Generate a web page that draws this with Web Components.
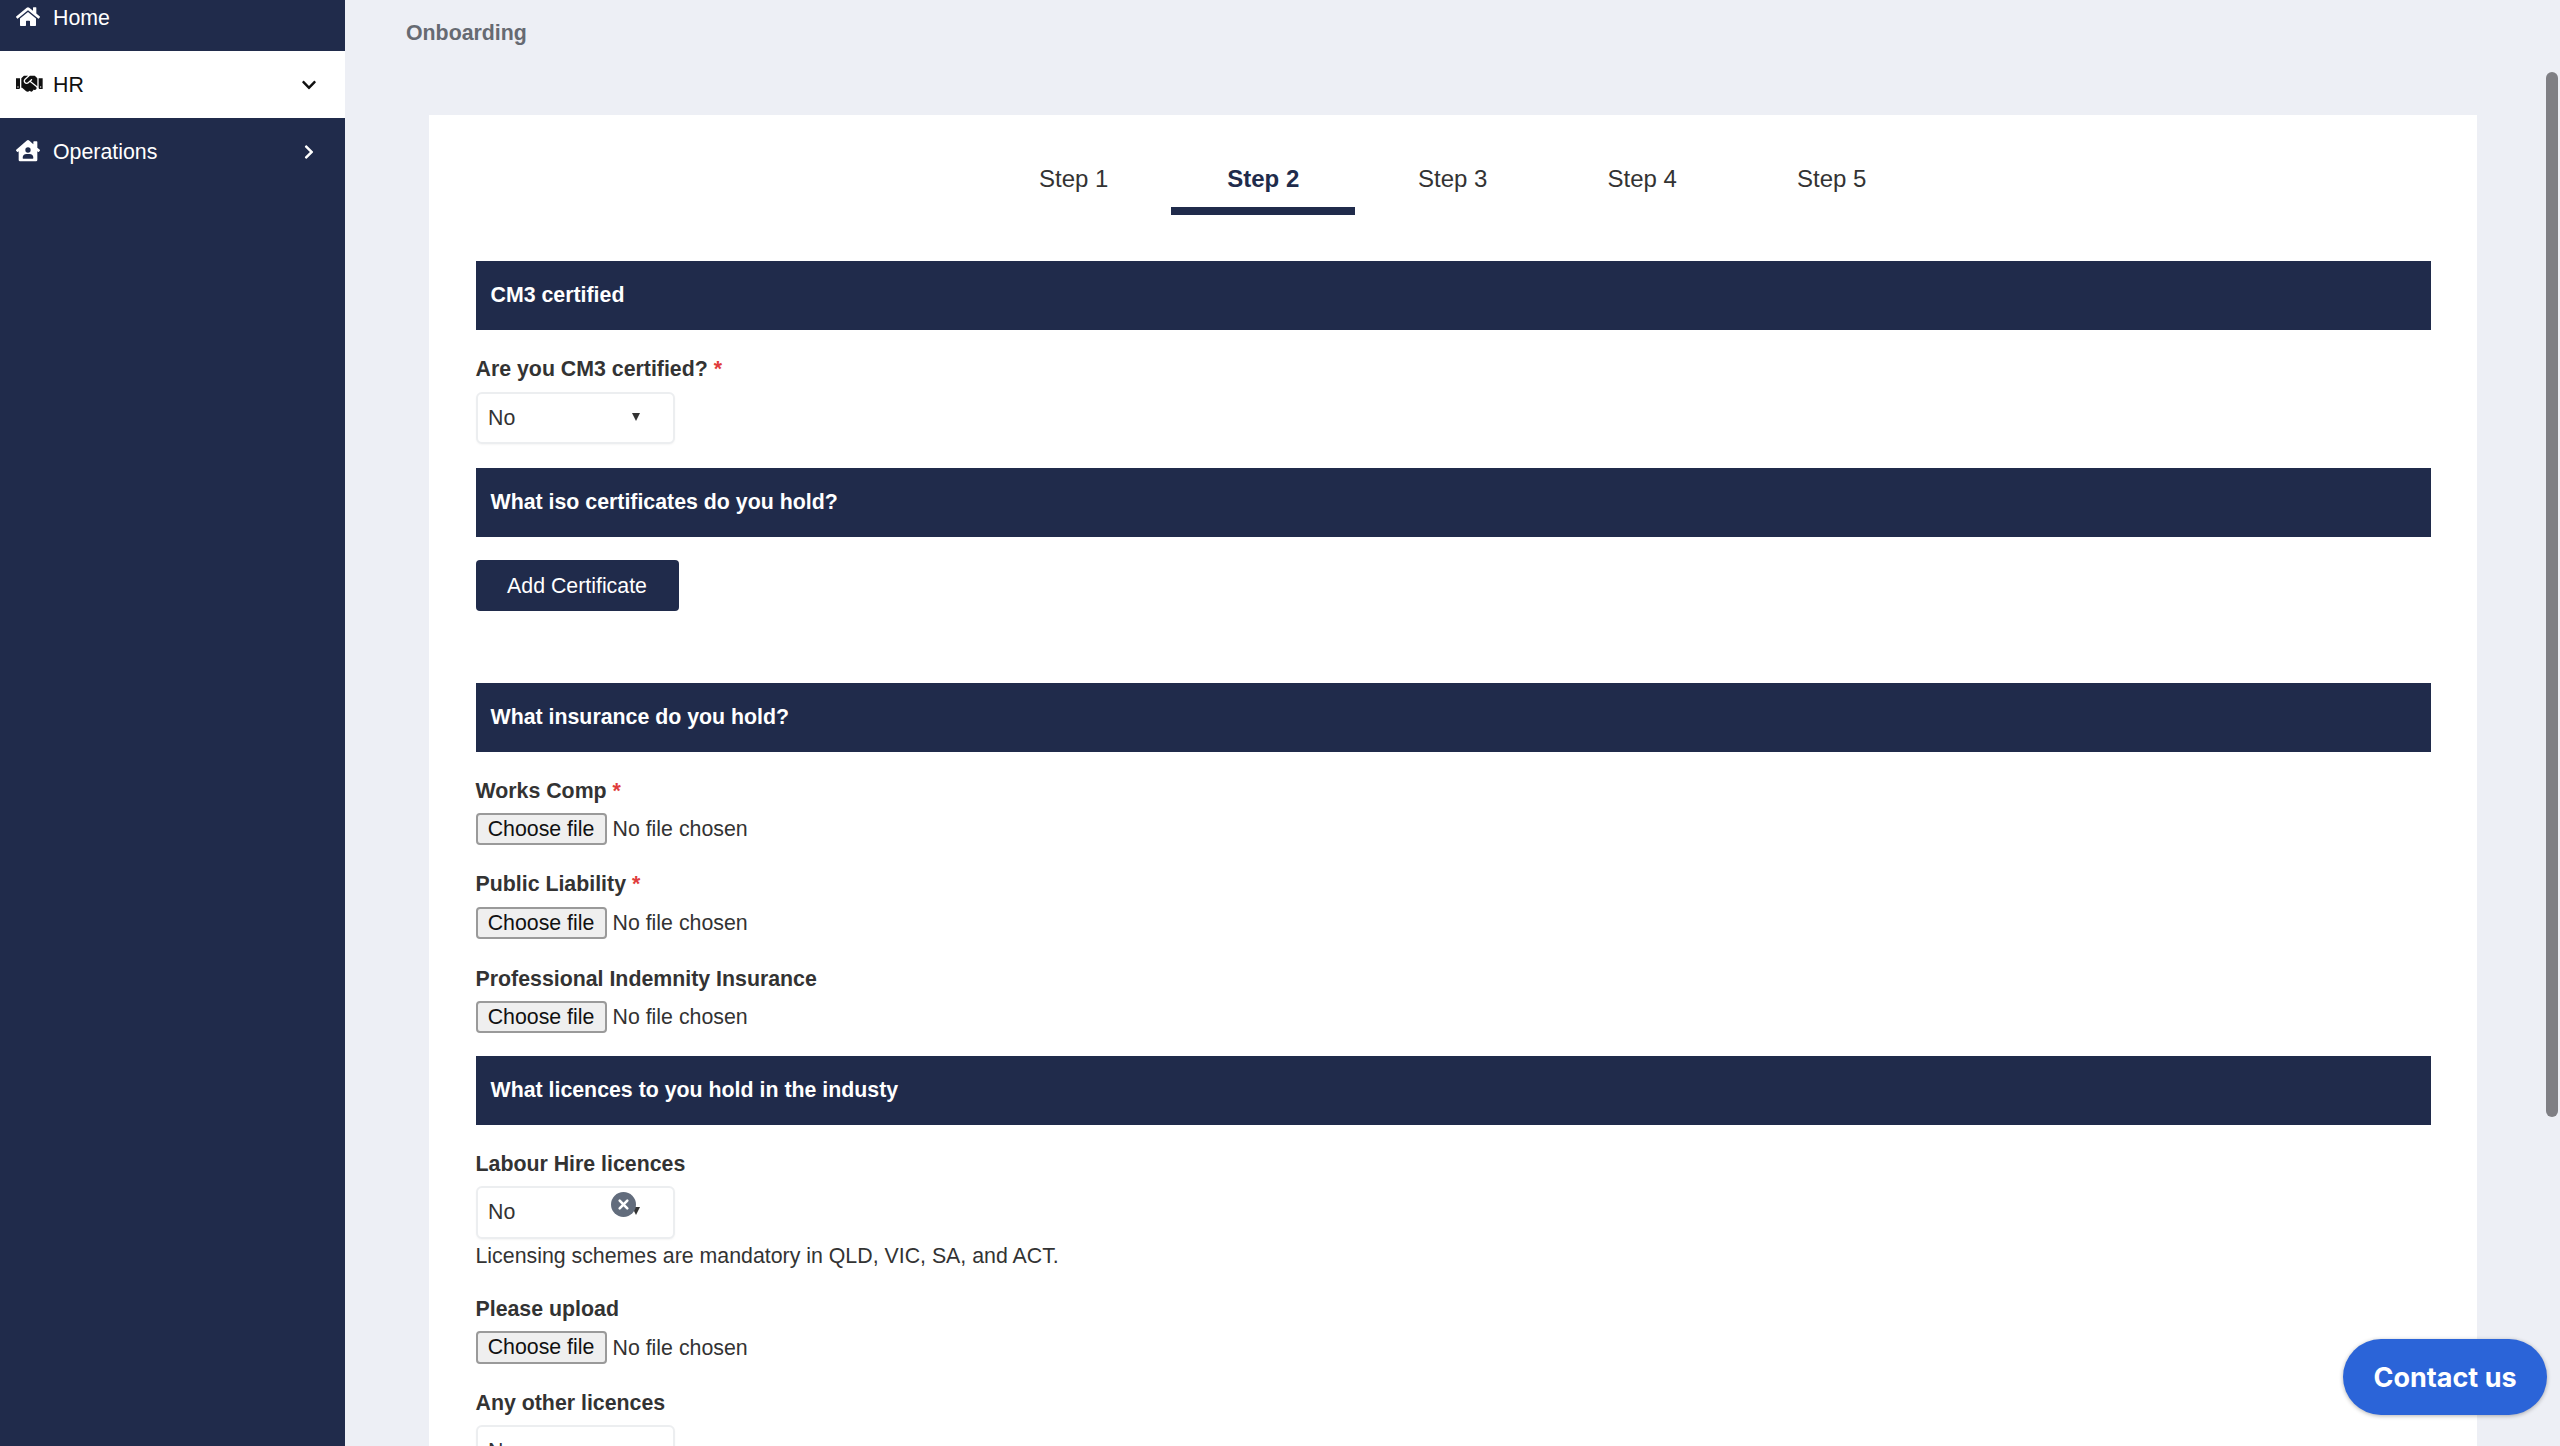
<!doctype html>
<html lang="en"><head><meta charset="utf-8"><title>Onboarding</title>
<style>
html,body{margin:0;height:1446px;overflow:hidden;background:#edeff5;font-family:"Liberation Sans",Arial,sans-serif;font-size:21.33px;color:#333}
</style></head><body>
<x-app>
  <x-sidebar slot="side">
    <x-nav-item icon="home" style="margin-top:-16px">Home</x-nav-item>
    <x-nav-item icon="handshake" chevron="down" active>HR</x-nav-item>
    <x-nav-item icon="house" chevron="right">Operations</x-nav-item>
  </x-sidebar>
  <x-page-title>Onboarding</x-page-title>
  <x-card>
    <x-tabs>
      <x-tab>Step 1</x-tab><x-tab active>Step 2</x-tab><x-tab>Step 3</x-tab><x-tab>Step 4</x-tab><x-tab>Step 5</x-tab>
    </x-tabs>
    <x-section style="margin-top:46px">CM3 certified</x-section>
    <x-label required style="margin-top:26px">Are you CM3 certified?</x-label>
    <x-select style="margin-top:10px">No</x-select>
    <x-section style="margin-top:24px">What iso certificates do you hold?</x-section>
    <x-button style="margin-top:23px">Add Certificate</x-button>
    <x-section style="margin-top:72px">What insurance do you hold?</x-section>
    <x-label required style="margin-top:26px">Works Comp</x-label>
    <x-file style="margin-top:9px"></x-file>
    <x-label required style="margin-top:26px">Public Liability</x-label>
    <x-file style="margin-top:10px"></x-file>
    <x-label style="margin-top:27px">Professional Indemnity Insurance</x-label>
    <x-file style="margin-top:9px"></x-file>
    <x-section style="margin-top:23px">What licences to you hold in the industy</x-section>
    <x-label style="margin-top:26px">Labour Hire licences</x-label>
    <x-select clear style="margin-top:9px;height:53px">No</x-select>
    <x-help style="margin-top:4px">Licensing schemes are mandatory in QLD, VIC, SA, and ACT.</x-help>
    <x-label style="margin-top:27px">Please upload</x-label>
    <x-file style="margin-top:9px;height:33px"></x-file>
    <x-label style="margin-top:26px">Any other licences</x-label>
    <x-select style="margin-top:9px">No</x-select>
  </x-card>
  <x-contact slot="over">Contact us</x-contact>
  <x-scrollbar slot="over"></x-scrollbar>
</x-app>
<script>
const ICONS={
home:['0 0 576 512','M280.37 148.26L96 300.11V464a16 16 0 0 0 16 16l112.06-.29a16 16 0 0 0 15.92-16V368a16 16 0 0 1 16-16h64a16 16 0 0 1 16 16v95.64a16 16 0 0 0 16 16.05L464 480a16 16 0 0 0 16-16V300L295.67 148.26a12.19 12.19 0 0 0-15.3 0zM571.6 251.47L488 182.56V44.05a12 12 0 0 0-12-12h-56a12 12 0 0 0-12 12v72.61L318.47 43a48 48 0 0 0-61 0L4.34 251.47a12 12 0 0 0-1.6 16.9l25.5 31A12 12 0 0 0 45.15 301l235.22-193.74a12.19 12.19 0 0 1 15.3 0L530.9 301a12 12 0 0 0 16.9-1.6l25.5-31a12 12 0 0 0-1.7-16.93z'],
handshake:['0 0 640 512','M434.7 64h-85.9c-8 0-15.7 3-21.6 8.4l-98.3 90c-.1.1-.2.3-.3.4-16.6 15.6-16.3 40.5-2.1 56 12.7 13.9 39.4 17.6 56.1 2.7.1-.1.3-.1.4-.2l79.9-73.2c6.5-5.9 16.7-5.5 22.6 1 6 6.5 5.5 16.6-1 22.6l-26.1 23.9L504 313.8c2.9 2.4 5.5 5 7.9 7.7V128l-54.6-54.6c-5.9-6-14.1-9.4-22.6-9.4zM544 128.2v223.9c0 17.7 14.3 32 32 32h64V128.2h-96zm48 223.9c-8.8 0-16-7.2-16-16s7.2-16 16-16 16 7.2 16 16-7.2 16-16 16zM0 384h64c17.7 0 32-14.3 32-32V128.2H0V384zm48-63.9c8.8 0 16 7.2 16 16s-7.2 16-16 16-16-7.2-16-16c0-8.9 7.2-16 16-16zm435.9 18.6L334.6 217.5l-30 27.5c-29.7 27.1-75.2 24.5-101.7-4.4-26.9-29.4-24.8-74.9 4.4-101.7L289.1 64h-83.8c-8.5 0-16.6 3.4-22.6 9.4L128 128v223.9h18.3l90.5 81.9c27.4 22.3 67.7 18.1 90-9.3l.2-.2 17.9 15.5c15.9 13 39.4 10.5 52.3-5.4l31.4-38.6 5.4 4.4c13.7 11.1 33.9 9.1 45-4.7l9.5-11.7c11.2-13.8 9.1-33.9-4.6-45.1z'],
house:['0 0 576 512','M570.69,236.27,512,184.44V48a16,16,0,0,0-16-16H432a16,16,0,0,0-16,16V99.67L314.78,10.3C308.5,4.61,296.53,0,288,0s-20.46,4.61-26.74,10.3l-256,226A18.27,18.27,0,0,0,0,248.2a18.64,18.64,0,0,0,4.09,10.71L25.5,282.7a21.14,21.14,0,0,0,12,5.3,21.67,21.67,0,0,0,10.69-4.11l15.9-14V480a32,32,0,0,0,32,32H480a32,32,0,0,0,32-32V269.88l15.91,14A21.94,21.94,0,0,0,538.63,288a20.89,20.89,0,0,0,11.87-5.31l21.41-23.81A21.64,21.64,0,0,0,576,248.19,21,21,0,0,0,570.69,236.27ZM288,176a64,64,0,1,1-64,64A64,64,0,0,1,288,176ZM400,448H176a16,16,0,0,1-16-16,96,96,0,0,1,96-96h64a96,96,0,0,1,96,96A16,16,0,0,1,400,448Z'],
down:['0 0 448 512','M207.029 381.476L12.686 187.132c-9.373-9.373-9.373-24.569 0-33.941l22.667-22.667c9.357-9.357 24.522-9.375 33.901-.04L224 284.505l154.745-154.021c9.379-9.335 24.544-9.317 33.901.04l22.667 22.667c9.373 9.373 9.373 24.569 0 33.941L240.971 381.476c-9.373 9.372-24.569 9.372-33.942 0z'],
right:['0 0 320 512','M285.476 272.971L91.132 467.314c-9.373 9.373-24.569 9.373-33.941 0l-22.667-22.667c-9.357-9.357-9.375-24.522-.04-33.901L188.505 256 34.484 101.255c-9.335-9.379-9.317-24.544.04-33.901l22.667-22.667c9.373-9.373 24.569-9.373 33.941 0L285.475 239.03c9.373 9.372 9.373 24.568.001 33.941z']
};
const svg=(n,h)=>{const[v,d]=ICONS[n];const[,,w,ht]=v.split(' ').map(Number);return `<svg viewBox="${v}" width="${(w/ht*h).toFixed(2)}" height="${h}" fill="currentColor" aria-hidden="true"><path d="${d}"/></svg>`};
function def(name,css,html){
  customElements.define(name,class extends HTMLElement{
    constructor(){super();this.attachShadow({mode:'open'})}
    connectedCallback(){this.shadowRoot.innerHTML=`<style>${css}</style>`+(typeof html==='function'?html(this):html)}
  });
}
def('x-app',`:host{display:flex;height:1446px;overflow:hidden;position:relative}
main{flex:1;min-width:0}`,`<slot name="side"></slot><main><slot></slot></main><slot name="over"></slot>`);
def('x-sidebar',`:host{display:block;flex:0 0 345px;width:345px;height:1446px;background:#202b4b;color:#fff}`,`<slot></slot>`);
def('x-nav-item',`:host{display:flex;align-items:center;height:67px;padding:0 29px 0 16px;box-sizing:border-box;color:#fff;font-size:21.33px;position:relative}
:host([active]){background:#fff;color:#111}
.i{display:flex;width:37px;flex:none;align-items:center;margin-top:-1px}
.t{flex:1;padding-top:1px}
.c{display:flex;width:14px;justify-content:center}`,
el=>`<span class="i">${svg(el.getAttribute('icon'),21.33)}</span><span class="t"><slot></slot></span>${el.getAttribute('chevron')?`<span class="c">${svg(el.getAttribute('chevron'),16)}</span>`:''}`);
def('x-page-title',`:host{display:block;margin:20px 0 0 61px;line-height:26px;font-weight:700;color:#666a72;font-size:21.33px}`,`<slot></slot>`);
def('x-card',`:host{display:block;margin:69px 0 0 84px;width:2048px;height:1400px;box-sizing:border-box;background:#fff;padding:0 46px 0 46.5px}`,`<slot></slot>`);
def('x-tabs',`:host{display:flex;justify-content:center;gap:5.5px;padding:24px 1px 0 0}`,`<slot></slot>`);
def('x-tab',`:host{display:block;width:184px;box-sizing:border-box;height:76px;padding-top:26px;line-height:28px;text-align:center;font-size:24px;color:#333;border-bottom:8px solid transparent}
:host([active]){font-weight:700;color:#202b4b;border-bottom-color:#202b4b}`,`<slot></slot>`);
def('x-section',`:host{display:flex;align-items:center;height:69px;box-sizing:border-box;padding:0 15px 1px;background:#202b4b;color:#fff;font-weight:700;font-size:21.33px}`,`<slot></slot>`);
def('x-label',`:host{display:block;line-height:26px;font-weight:700;color:#333;font-size:21.33px}
b{color:#e03c3c;font-weight:700}`,el=>`<slot></slot>${el.hasAttribute('required')?' <b>*</b>':''}`);
def('x-select',`:host{display:block;position:relative;width:199px;height:52px;box-sizing:border-box;border:2px solid #eceef0;border-radius:6px;background:#fff;color:#333;font-size:21.33px;line-height:48px;padding:0 0 0 10.5px;box-shadow:0 1px 2px rgba(0,0,0,.04)}
.a{position:absolute;left:154px;top:19px;width:0;height:0;border-left:4.5px solid transparent;border-right:4.5px solid transparent;border-top:8px solid #333}
.x{position:absolute;left:133px;top:4px;width:25px;height:25px}`,
el=>`<slot></slot><span class="a"></span>${el.hasAttribute('clear')?`<svg class="x" viewBox="0 0 25 25" aria-hidden="true"><circle cx="12.5" cy="12.5" r="12.5" fill="#626c7c"/><path d="M8.7 8.7l7.6 7.6M16.3 8.7l-7.6 7.6" stroke="#fff" stroke-width="2.6" stroke-linecap="round"/></svg>`:''}`);
def('x-button',`:host{display:flex;align-items:center;justify-content:center;width:203px;height:51px;box-sizing:border-box;padding-top:1px;border-radius:4px;background:#202b4b;color:#fff;font-size:21.33px}`,`<slot></slot>`);
def('x-file',`:host{display:flex;align-items:center;height:32px;font-size:21.33px;color:#333}
.b{display:flex;align-items:center;justify-content:center;width:131px;height:100%;box-sizing:border-box;background:#efefef;border:2px solid #9a9a9a;border-radius:4px;color:#111;margin-right:6px}
.n{padding-top:1px}`,
`<span class="b">Choose file</span><span class="n">No file chosen</span>`);
def('x-help',`:host{display:block;line-height:26px;font-size:21.33px;color:#333}`,`<slot></slot>`);
def('x-contact',`:host{position:absolute;left:2343px;top:1339px;width:204px;height:76px;box-sizing:border-box;padding-top:1px;display:flex;align-items:center;justify-content:center;border-radius:38px;background:#2b64d8;color:#fff;font:700 27px Inter,"Liberation Sans",sans-serif;box-shadow:0 1px 4px rgba(0,0,0,.3)}`,`<slot></slot>`);
def('x-scrollbar',`:host{position:absolute;left:2546px;top:72px;width:12px;height:1045px;border-radius:6px;background:#7f7f84}`,``);
</script>
</body></html>
